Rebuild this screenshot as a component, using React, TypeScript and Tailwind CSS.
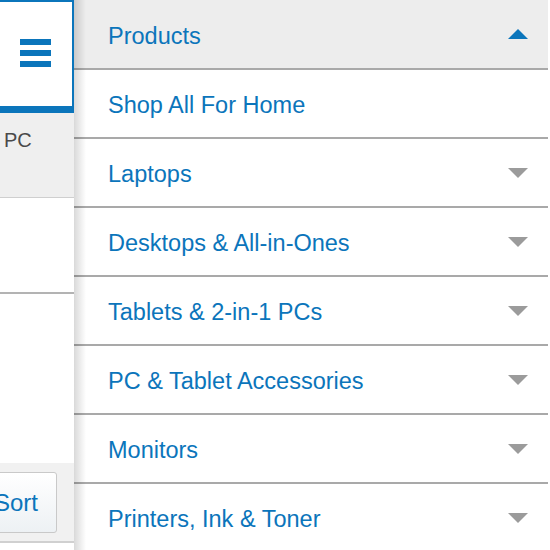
import React from 'react';

const MENU_ITEMS = [
  'Shop All For Home',
  'Laptops',
  'Desktops & All-in-Ones',
  'Tablets & 2-in-1 PCs',
  'PC & Tablet Accessories',
  'Monitors',
  'Printers, Ink & Toner',
];

const ChevronTriangle: React.FC<{ up?: boolean }> = ({ up }) => (
  <svg width="20" height="10" viewBox="0 0 20 10" className="shrink-0">
    {up ? (
      <polygon points="0,10 20,10 10,0" fill="#0b75bb" />
    ) : (
      <polygon points="0,0 20,0 10,10" fill="#9b9b9b" />
    )}
  </svg>
);

const App: React.FC = () => {
  return (
    <div
      className="flex w-[550px] h-[550px] overflow-hidden bg-white"
      style={{ fontFamily: '"Liberation Sans", Arial, sans-serif' }}
    >
      {/* Left column, partly behind the menu */}
      <div className="w-[74px] shrink-0 flex flex-col">
        <div className="h-[113px] bg-white border-t-2 border-r-2 border-b-[7px] border-[#0b75bb] flex flex-col items-center justify-center gap-[5px] pb-[2px] pr-[2px]">
          <span className="block w-[31px] h-[6px] bg-[#0b75bb]" />
          <span className="block w-[31px] h-[6px] bg-[#0b75bb]" />
          <span className="block w-[31px] h-[6px] bg-[#0b75bb]" />
        </div>
        <div className="h-[85px] bg-[#efefef] border-b border-[#cfcfcf] pl-[4px] pt-[12px] text-[20px] text-[#4a4a4a]">
          PC
        </div>
        <div className="h-[96px] border-b-2 border-[#b3b3b3]" />
        <div className="h-[169px]" />
        <div className="h-[80px] bg-[#f1f1f1] border-b-2 border-[#d0d0d0] pt-[9px]">
          <button className="ml-[-20px] w-[77px] h-[61px] rounded-[3px] border border-[#c9c9c9] bg-gradient-to-b from-white to-[#edf1f4] flex items-center justify-end pr-[18px] text-[24px] text-[#0b75bb]">
            Sort
          </button>
        </div>
      </div>

      {/* Products menu */}
      <div className="relative flex-1 mr-[2px] flex flex-col">
        <div className="h-[70px] shrink-0 bg-[#ededed] border-b-2 border-[#a9a9a9] flex items-center justify-between pl-[34px] pr-[20px]">
          <span className="pt-[6px] text-[23.5px] text-[#0b75bb]">Products</span>
          <ChevronTriangle up />
        </div>
        {MENU_ITEMS.map((item, i) => (
          <div
            key={item}
            className="h-[69px] shrink-0 border-b-2 border-[#a9a9a9] flex items-center justify-between pl-[34px] pr-[20px]"
          >
            <span className="pt-[4px] text-[23.5px] text-[#0b75bb]">{item}</span>
            {i > 0 && <ChevronTriangle />}
          </div>
        ))}
        <div className="pointer-events-none absolute inset-y-0 left-0 w-[12px] bg-gradient-to-r from-black/15 to-transparent" />
      </div>
    </div>
  );
};

export default App;
